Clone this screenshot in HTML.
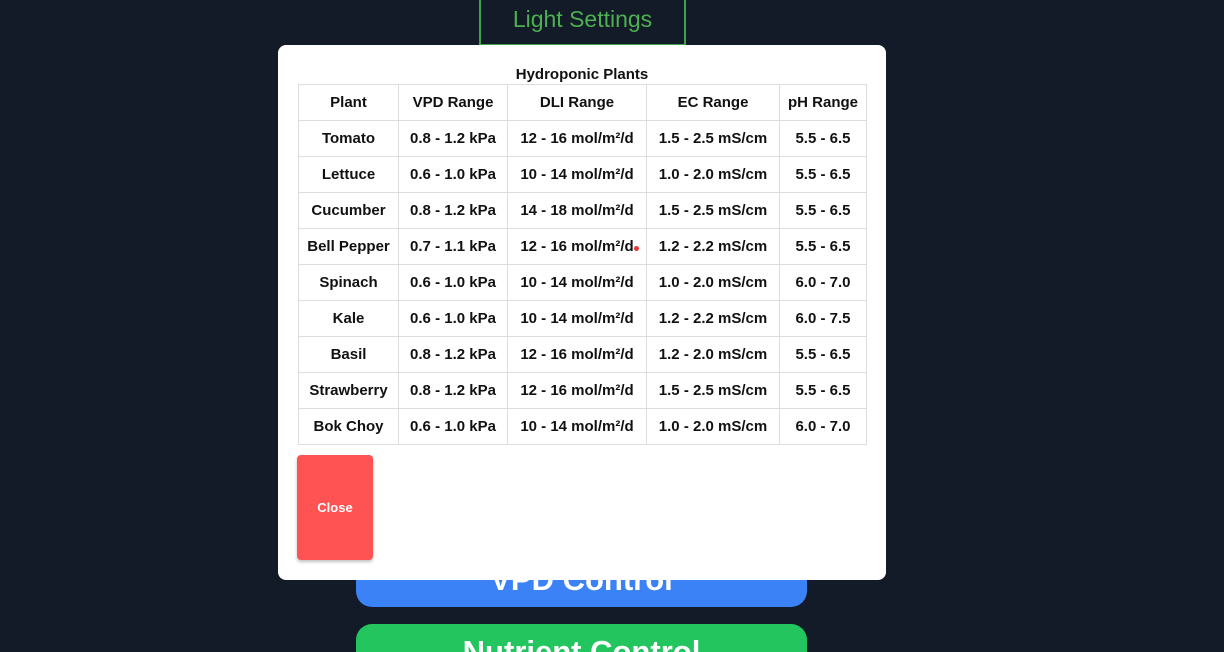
<!DOCTYPE html>
<html style="height:652px;overflow:hidden"><head><style>
body{margin:0;width:1224px;height:652px;background:#131a28;position:relative;overflow:hidden;font-family:"Liberation Sans",sans-serif}
.ls{position:absolute;left:479px;top:-10px;width:203px;height:54px;border:2px solid #3fa34d;border-top:none;color:#4caf50;font-size:23px;text-align:center;line-height:58px}
.btn{position:absolute;left:356px;width:451px;border-radius:16px;color:#fff;font-weight:bold;font-size:31px;text-align:center;overflow:hidden}
.modal{position:absolute;left:278px;top:45px;width:608px;height:535px;background:#fff;border-radius:8px}
.title{position:absolute;left:0;width:100%;top:21px;text-align:center;font-size:15px;font-weight:bold;color:#111}
table{position:absolute;left:20px;top:39px;border-collapse:collapse;font-size:15px;font-weight:bold;color:#111}
td{border:1px solid #ddd;height:35px;padding:0;text-align:center;white-space:nowrap}
.close{position:absolute;left:19px;top:410px;width:76px;height:105px;background:#ff5252;border-radius:4px;color:#fff;font-weight:bold;font-size:13px;text-align:center;line-height:105px;box-shadow:0 2px 3px rgba(0,0,0,.25)}
</style></head><body>
<div class="ls">Light Settings</div>
<div class="btn" style="top:547px;height:60px;background:#3b82f6;line-height:66px">VPD Control</div>
<div class="btn" style="top:624px;height:28px;border-radius:16px 16px 0 0;background:#22c55e;line-height:56px">Nutrient Control</div>
<div class="modal">
<div class="title">Hydroponic Plants</div>
<table>
<colgroup><col style="width:100px"><col style="width:109px"><col style="width:139px"><col style="width:133px"><col style="width:87px"></colgroup>
<tr><td>Plant</td><td>VPD Range</td><td>DLI Range</td><td>EC Range</td><td>pH Range</td></tr>
<tr><td>Tomato</td><td>0.8 - 1.2 kPa</td><td>12 - 16 mol/m²/d</td><td>1.5 - 2.5 mS/cm</td><td>5.5 - 6.5</td></tr>
<tr><td>Lettuce</td><td>0.6 - 1.0 kPa</td><td>10 - 14 mol/m²/d</td><td>1.0 - 2.0 mS/cm</td><td>5.5 - 6.5</td></tr>
<tr><td>Cucumber</td><td>0.8 - 1.2 kPa</td><td>14 - 18 mol/m²/d</td><td>1.5 - 2.5 mS/cm</td><td>5.5 - 6.5</td></tr>
<tr><td>Bell Pepper</td><td>0.7 - 1.1 kPa</td><td>12 - 16 mol/m²/d</td><td>1.2 - 2.2 mS/cm</td><td>5.5 - 6.5</td></tr>
<tr><td>Spinach</td><td>0.6 - 1.0 kPa</td><td>10 - 14 mol/m²/d</td><td>1.0 - 2.0 mS/cm</td><td>6.0 - 7.0</td></tr>
<tr><td>Kale</td><td>0.6 - 1.0 kPa</td><td>10 - 14 mol/m²/d</td><td>1.2 - 2.2 mS/cm</td><td>6.0 - 7.5</td></tr>
<tr><td>Basil</td><td>0.8 - 1.2 kPa</td><td>12 - 16 mol/m²/d</td><td>1.2 - 2.0 mS/cm</td><td>5.5 - 6.5</td></tr>
<tr><td>Strawberry</td><td>0.8 - 1.2 kPa</td><td>12 - 16 mol/m²/d</td><td>1.5 - 2.5 mS/cm</td><td>5.5 - 6.5</td></tr>
<tr><td>Bok Choy</td><td>0.6 - 1.0 kPa</td><td>10 - 14 mol/m²/d</td><td>1.0 - 2.0 mS/cm</td><td>6.0 - 7.0</td></tr>
</table>
<div style="position:absolute;left:356px;top:201px;width:5px;height:5px;border-radius:50%;background:#e53935"></div>
<div class="close">Close</div>
</div>
</body></html>
